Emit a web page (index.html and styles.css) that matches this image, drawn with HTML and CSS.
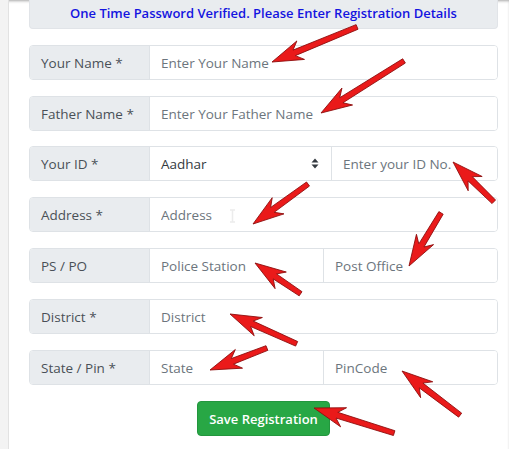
FILE: index.html
```html
<!DOCTYPE html>
<html lang="en">
<head>
    <meta charset="UTF-8">
    <meta name="viewport" content="width=device-width, initial-scale=1.0">
    <title>Registration Details</title>
    <link rel="stylesheet" href="styles.css">
</head>
<body>
    <div class="page">
        <div class="sidebar"></div>

        <main class="content">
            <div class="notice">One Time Password Verified. Please Enter Registration Details</div>

            <form class="reg-form" onsubmit="return false">
                <div class="input-group">
                    <span class="group-label">Your Name *</span>
                    <input class="field" type="text" placeholder="Enter Your Name">
                </div>
                <div class="input-group">
                    <span class="group-label">Father Name *</span>
                    <input class="field" type="text" placeholder="Enter Your Father Name">
                </div>
                <div class="input-group">
                    <span class="group-label">Your ID *</span>
                    <div class="select-box">
                        <span>Aadhar</span>
                        <svg class="select-icon" width="8" height="11" viewBox="0 0 8 11">
                            <path d="M4 0.5 L7.5 4.5 H0.5 Z M4 10.5 L7.5 6.5 H0.5 Z" fill="#343a40"/>
                        </svg>
                    </div>
                    <input class="field" type="text" placeholder="Enter your ID No.">
                </div>
                <div class="input-group">
                    <span class="group-label">Address *</span>
                    <input class="field" type="text" placeholder="Address">
                </div>
                <div class="input-group">
                    <span class="group-label">PS / PO</span>
                    <input class="field half" type="text" placeholder="Police Station">
                    <input class="field half" type="text" placeholder="Post Office">
                </div>
                <div class="input-group">
                    <span class="group-label">District *</span>
                    <input class="field" type="text" placeholder="District">
                </div>
                <div class="input-group">
                    <span class="group-label">State / Pin *</span>
                    <input class="field half" type="text" placeholder="State">
                    <input class="field half" type="text" placeholder="PinCode">
                </div>
                <div class="actions">
                    <button class="btn-save" type="submit">Save Registration</button>
                </div>
            </form>
        </main>

        <!-- annotation arrows (and the mouse cursor) drawn over the form -->
        <svg class="arrows" width="509" height="449" viewBox="0 0 509 449">
            <path class="cursor" d="M230 210 H235 M232.5 210 V222 M230 222 H235"/>
            <g class="arrow" transform="translate(272 62) rotate(-22.4)">
                <polygon points="0,0 31,-10 24,-3 92,-2.5 92,2.5 24,3 31,10"/>
            </g>
            <g class="arrow" transform="translate(321 113) rotate(-32.1)">
                <polygon points="0,0 31,-10 24,-3 98,-2.5 98,2.5 24,3 31,10"/>
            </g>
            <g class="arrow" transform="translate(453 162) rotate(44.3)">
                <polygon points="0,0 31,-10 24,-3 57,-2.5 57,2.5 24,3 31,10"/>
            </g>
            <g class="arrow" transform="translate(253 224) rotate(-36)">
                <polygon points="0,0 31,-10 24,-3 68,-2.5 68,2.5 24,3 31,10"/>
            </g>
            <g class="arrow" transform="translate(409 266) rotate(-58.9)">
                <polygon points="0,0 31,-10 24,-3 62,-2.5 62,2.5 24,3 31,10"/>
            </g>
            <g class="arrow" transform="translate(255 263) rotate(34)">
                <polygon points="0,0 31,-10 24,-3 55,-2.5 55,2.5 24,3 31,10"/>
            </g>
            <g class="arrow" transform="translate(230 314) rotate(24.1)">
                <polygon points="0,0 31,-10 24,-3 73,-2.5 73,2.5 24,3 31,10"/>
            </g>
            <g class="arrow" transform="translate(210 370) rotate(-21.1)">
                <polygon points="0,0 31,-10 24,-3 61,-2.5 61,2.5 24,3 31,10"/>
            </g>
            <g class="arrow" transform="translate(402 371) rotate(37.2)">
                <polygon points="0,0 31,-10 24,-3 73,-2.5 73,2.5 24,3 31,10"/>
            </g>
            <g class="arrow" transform="translate(314 408) rotate(17.4)">
                <polygon points="0,0 31,-10 24,-3 84,-2.5 84,2.5 24,3 31,10"/>
            </g>
        </svg>
    </div>
</body>
</html>
```

FILE: styles.css
```css
* {
    box-sizing: border-box;
}
body {
    margin: 0;
    font-family: 'Open Sans', 'Noto Sans', sans-serif;
    font-size: 13.5px;
    color: #495057;
    background-color: #fff;
}
.page {
    position: relative;
    display: flex;
    width: 509px;
    height: 449px;
    overflow: hidden;
    box-shadow: inset 0 2px 3px -1px rgba(0, 0, 0, 0.35);
}
.sidebar {
    flex: 0 0 9px;
    background-color: #f3f3f3;
    border-right: 1px solid #e2e2e2;
}
.content {
    flex: 1;
    min-width: 0;
    padding: 0 11px 0 20px;
}
.notice {
    background-color: #e9ecef;
    border: 1px solid #e1e4e8;
    border-top: none;
    border-radius: 0 0 4px 4px;
    color: #1414e0;
    font-size: 13px;
    font-weight: 600;
    text-align: center;
    line-height: 20px;
    padding: 3px 0 5px;
}
.reg-form {
    margin-top: 16px;
}
.input-group {
    display: flex;
    height: 35px;
    margin-bottom: 16px;
    border: 1px solid #dee2e6;
    border-radius: 4px;
    overflow: hidden;
}
.input-group:nth-child(2) {
    margin-top: 1px;
    margin-bottom: 15px;
}
.group-label {
    flex: 0 0 120px;
    display: flex;
    align-items: center;
    padding-left: 11px;
    background-color: #e9ecef;
    border-right: 1px solid #dee2e6;
    color: #495057;
}
.field {
    flex: 1;
    width: 0;
    min-width: 0;
    border: none;
    padding: 0 11px;
    font-family: inherit;
    font-size: 13.5px;
    color: #495057;
    background-color: #fff;
    outline: none;
}
.field + .field,
.select-box + .field {
    border-left: 1px solid #dee2e6;
}
.field::placeholder {
    color: #6c757d;
    opacity: 1;
}
.select-box {
    flex: 0 0 181px;
    display: flex;
    align-items: center;
    justify-content: space-between;
    padding: 0 12px 0 11px;
    color: #343a40;
}
.actions {
    display: flex;
    justify-content: center;
}
.btn-save {
    background-color: #28a745;
    border: 1px solid #23963e;
    color: #fff;
    font-family: inherit;
    font-size: 13px;
    font-weight: 600;
    height: 35px;
    padding: 0 11px;
    border-radius: 4px;
    cursor: pointer;
}
.arrows {
    position: absolute;
    left: 0;
    top: 0;
    pointer-events: none;
}
.cursor {
    fill: none;
    stroke: #ececec;
    stroke-width: 1.5;
}
.arrow polygon {
    fill: #ea1a1a;
    stroke: #8c0c0c;
    stroke-width: 0.8;
    stroke-linejoin: round;
}
```
